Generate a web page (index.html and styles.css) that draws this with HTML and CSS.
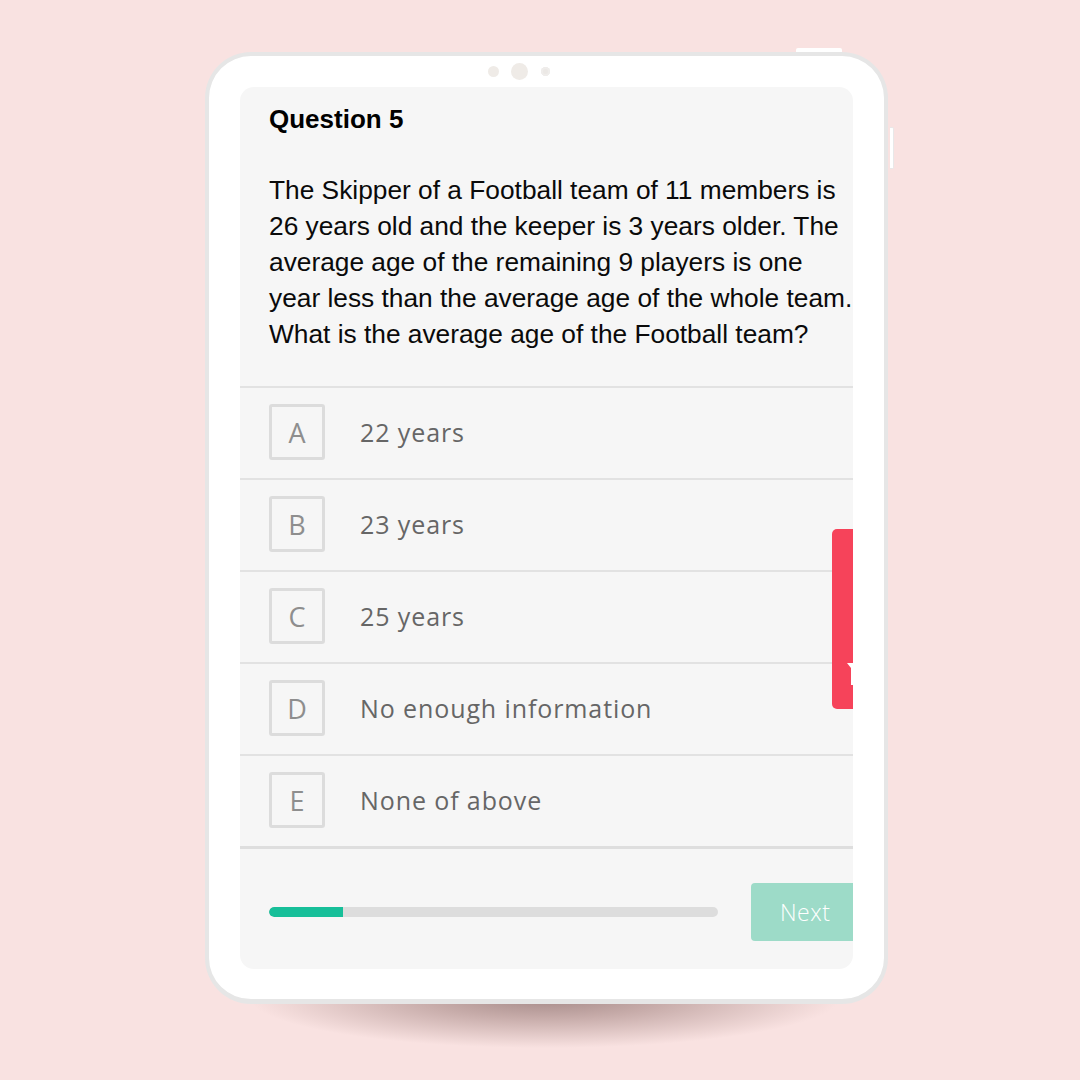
FILE: index.html
```html
<!DOCTYPE html>
<html lang="en">
<head>
<meta charset="utf-8">
<title>Quiz</title>
<link rel="stylesheet" href="styles.css">
</head>
<body>
<div class="stage">
  <div class="shadow"></div>
  <div class="tablet">
    <span class="top-btn"></span>
    <span class="side-btn"></span>
    <div class="camera">
      <span class="dot d1"></span>
      <span class="dot d2"></span>
      <span class="dot d3"></span>
    </div>
    <div class="screen">
      <div class="question">
        <h1 class="q-title">Question 5</h1>
        <p class="q-text">The Skipper of a Football team of 11 members is 26 years old and the keeper is 3 years older. The average age of the remaining 9 players is one year less than the average age of the whole team. What is the average age of the Football team?</p>
      </div>
      <ul class="options">
        <li class="option"><span class="key">A</span><span class="label">22 years</span></li>
        <li class="option"><span class="key">B</span><span class="label">23 years</span></li>
        <li class="option"><span class="key">C</span><span class="label">25 years</span></li>
        <li class="option"><span class="key">D</span><span class="label">No enough information</span></li>
        <li class="option"><span class="key">E</span><span class="label">None of above</span></li>
      </ul>
      <div class="footer">
        <div class="progress"><div class="fill" style="width:74px"></div></div>
        <button class="next">Next</button>
      </div>
      <div class="tab">
        <svg class="tab-icon" width="8" height="24" viewBox="0 0 8 24"><polygon points="0,0 8,0 8,22 4,22 4,5" fill="#ffffff"/></svg>
      </div>
    </div>
  </div>
</div>
</body>
</html>
```

FILE: styles.css
```css
html, body {
  margin: 0;
  padding: 0;
  background: #f9e2e1;
}
body {
  width: 1080px;
  height: 1080px;
  overflow: hidden;
  font-family: "Liberation Sans", Arial, sans-serif;
}
.stage {
  position: relative;
  margin: 52px 0 0 205px;
  width: 683px;
}
.shadow {
  position: absolute;
  left: 45px;
  top: 946px;
  width: 590px;
  height: 50px;
  background: radial-gradient(ellipse 50% 100% at 50% 0%, rgba(150, 122, 120, 0.85) 0%, rgba(165, 135, 132, 0.6) 40%, rgba(210, 180, 178, 0) 100%);
  z-index: 0;
}
.tablet {
  position: relative;
  z-index: 1;
  box-sizing: border-box;
  width: 683px;
  height: 952px;
  border: 4px solid #e6e6e6;
  border-bottom-width: 5px;
  border-radius: 46px;
  background: #ffffff;
  padding: 0 31px 30px;
  display: flex;
  flex-direction: column;
}
.top-btn {
  position: absolute;
  top: -8px;
  left: 587px;
  width: 46px;
  height: 4px;
  background: #ffffff;
  border-radius: 2px 2px 0 0;
}
.side-btn {
  position: absolute;
  top: 71px;
  left: 681px;
  width: 3px;
  height: 40px;
  background: #ffffff;
  border: 1px solid #e8e8e8;
  border-left: none;
  border-radius: 0 2px 2px 0;
}
.camera {
  height: 31px;
  display: flex;
  align-items: center;
  padding-left: 248px;
}
.dot {
  display: block;
  border-radius: 50%;
  background: #efebe7;
}
.d1 { width: 11px; height: 11px; }
.d2 { width: 17px; height: 17px; margin-left: 12px; }
.d3 { width: 9px; height: 9px; margin-left: 13px; background: #ebe8e5; box-shadow: inset 0 0 0 2px #efedeb; }

.screen {
  position: relative;
  width: 613px;
  height: 882px;
  background: #f6f6f6;
  border-radius: 14px;
  overflow: hidden;
  display: flex;
  flex-direction: column;
}
.question {
  padding: 18px 0 34px 29px;
}
.q-title {
  margin: 0;
  font-size: 26px;
  line-height: 28px;
  font-weight: 700;
  color: #000;
}
.q-text {
  margin: 39px 0 0;
  width: 586px;
  font-size: 26.3px;
  line-height: 36px;
  color: #0a0a0a;
}
.options {
  list-style: none;
  margin: 0;
  padding: 0;
  border-bottom: 3px solid #dedede;
}
.option {
  display: flex;
  align-items: center;
  gap: 35px;
  border-top: 2px solid #e2e2e2;
  padding: 16px 0 18px 29px;
}
.key {
  box-sizing: border-box;
  width: 56px;
  height: 56px;
  border: 3px solid #dcdcdc;
  border-radius: 3px;
  display: flex;
  align-items: center;
  justify-content: center;
  font-family: "Open Sans", "Noto Sans", sans-serif;
  font-weight: 400;
  font-size: 27px;
  color: #8e8e8e;
}
.label {
  font-family: "Open Sans", "Noto Sans", sans-serif;
  font-size: 25px;
  font-weight: 400;
  letter-spacing: 0.9px;
  color: #666666;
}
.footer {
  display: flex;
  align-items: center;
  padding: 34px 0 28px 29px;
}
.progress {
  width: 449px;
  height: 10px;
  border-radius: 5px;
  background: #dddddd;
  margin-right: 33px;
  overflow: hidden;
  flex: none;
}
.fill {
  height: 100%;
  background: #17bf99;
  border-radius: 5px 0 0 5px;
}
.next {
  flex: none;
  width: 112px;
  height: 58px;
  border: none;
  border-radius: 4px;
  background: #9ddbc8;
  color: #ffffff;
  font-family: "Open Sans", "Noto Sans", sans-serif;
  font-weight: 300;
  font-size: 23px;
  letter-spacing: 0.5px;
  text-align: left;
  padding: 0 0 0 29px;
}
.tab {
  position: absolute;
  left: 592px;
  top: 442px;
  width: 40px;
  height: 180px;
  background: #f6435a;
  border-radius: 5px;
}
.tab-icon {
  position: absolute;
  left: 15px;
  top: 134px;
}
```
